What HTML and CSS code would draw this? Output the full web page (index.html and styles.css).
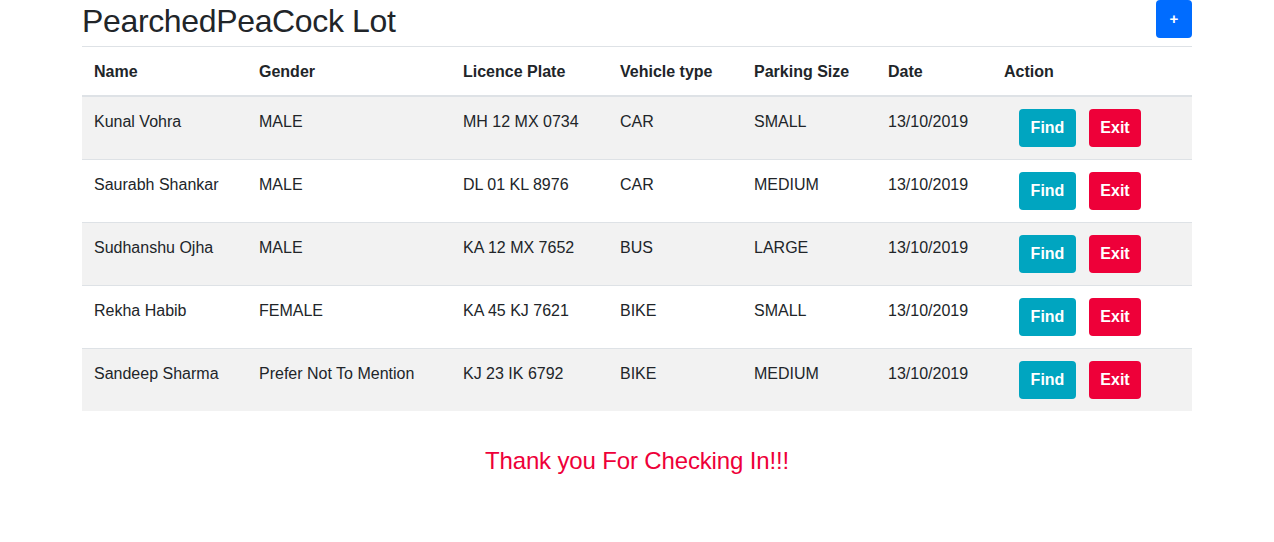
FILE: index.html
```html
<!DOCTYPE html>
<html>
<head>
<meta charset="utf-8">
<link rel="stylesheet" href="styles.css">
</head>
<body>
<div class="container">
  <div class="header">
    <h1 class="title">PearchedPeaCock Lot</h1>
    <button class="btn btn-add">+</button>
  </div>
  <table class="table">
    <thead>
      <tr>
        <th class="c1">Name</th>
        <th class="c2">Gender</th>
        <th class="c3">Licence Plate</th>
        <th class="c4">Vehicle type</th>
        <th class="c5">Parking Size</th>
        <th class="c6">Date</th>
        <th class="c7">Action</th>
      </tr>
    </thead>
    <tbody>
      <tr>
        <td>Kunal Vohra</td><td>MALE</td><td>MH 12 MX 0734</td><td>CAR</td><td>SMALL</td><td>13/10/2019</td>
        <td class="actions"><button class="btn btn-find">Find</button><button class="btn btn-exit">Exit</button></td>
      </tr>
      <tr>
        <td>Saurabh Shankar</td><td>MALE</td><td>DL 01 KL 8976</td><td>CAR</td><td>MEDIUM</td><td>13/10/2019</td>
        <td class="actions"><button class="btn btn-find">Find</button><button class="btn btn-exit">Exit</button></td>
      </tr>
      <tr>
        <td>Sudhanshu Ojha</td><td>MALE</td><td>KA 12 MX 7652</td><td>BUS</td><td>LARGE</td><td>13/10/2019</td>
        <td class="actions"><button class="btn btn-find">Find</button><button class="btn btn-exit">Exit</button></td>
      </tr>
      <tr>
        <td>Rekha Habib</td><td>FEMALE</td><td>KA 45 KJ 7621</td><td>BIKE</td><td>SMALL</td><td>13/10/2019</td>
        <td class="actions"><button class="btn btn-find">Find</button><button class="btn btn-exit">Exit</button></td>
      </tr>
      <tr>
        <td>Sandeep Sharma</td><td>Prefer Not To Mention</td><td>KJ 23 IK 6792</td><td>BIKE</td><td>MEDIUM</td><td>13/10/2019</td>
        <td class="actions"><button class="btn btn-find">Find</button><button class="btn btn-exit">Exit</button></td>
      </tr>
    </tbody>
  </table>
  <p class="thanks">Thank you For Checking In!!!</p>
</div>
</body>
</html>
```

FILE: styles.css
```css
* { box-sizing: border-box; }
html, body { margin: 0; padding: 0; }
body {
  font-family: "Liberation Sans", Arial, sans-serif;
  font-size: 16px;
  line-height: 24px;
  color: #212529;
  background: #fff;
}
.container {
  width: 1110px;
  margin: 0 auto;
}
.header {
  display: flex;
  justify-content: space-between;
  align-items: flex-start;
  height: 47px;
  border-bottom: 1px solid #dee2e6;
}
.title {
  margin: 2px 0 0 0;
  font-size: 32px;
  line-height: 38px;
  font-weight: 400;
  letter-spacing: -0.35px;
}
.btn {
  border: 0;
  border-radius: 4px;
  color: #fff;
  font-family: "Liberation Sans", Arial, sans-serif;
  font-weight: 700;
  font-size: 16px;
  line-height: 24px;
  height: 38px;
  padding: 7px 12px;
  cursor: pointer;
}
.btn-add {
  width: 36px;
  padding: 0;
  background: #006cff;
  font-size: 15px;
}
.table {
  width: 100%;
  border-collapse: collapse;
}
.table th, .table td {
  padding: 13px 12px 11px 12px;
  text-align: left;
  vertical-align: top;
}
.table td.actions {
  padding: 12px;
}
.table th {
  font-weight: 700;
  border-bottom: 2px solid #dee2e6;
}
.table td {
  border-top: 1px solid #dee2e6;
}
.table tbody tr:first-child td { border-top: 0; }
.table tbody tr:nth-child(odd) { background: #f2f2f2; }
.c1 { width: 165px; }
.c2 { width: 204px; }
.c3 { width: 157px; }
.c4 { width: 134px; }
.c5 { width: 134px; }
.c6 { width: 116px; }
.btn-find {
  background: #00a5c0;
  margin-left: 15px;
  width: 57px;
  padding: 0;
}
.btn-exit {
  background: #ee0039;
  margin-left: 13px;
  width: 52px;
  padding: 0;
}
.thanks {
  margin: 35px 0 0 0;
  text-align: center;
  font-size: 24px;
  line-height: 30px;
  letter-spacing: -0.15px;
  color: #ee0039;
}
```
